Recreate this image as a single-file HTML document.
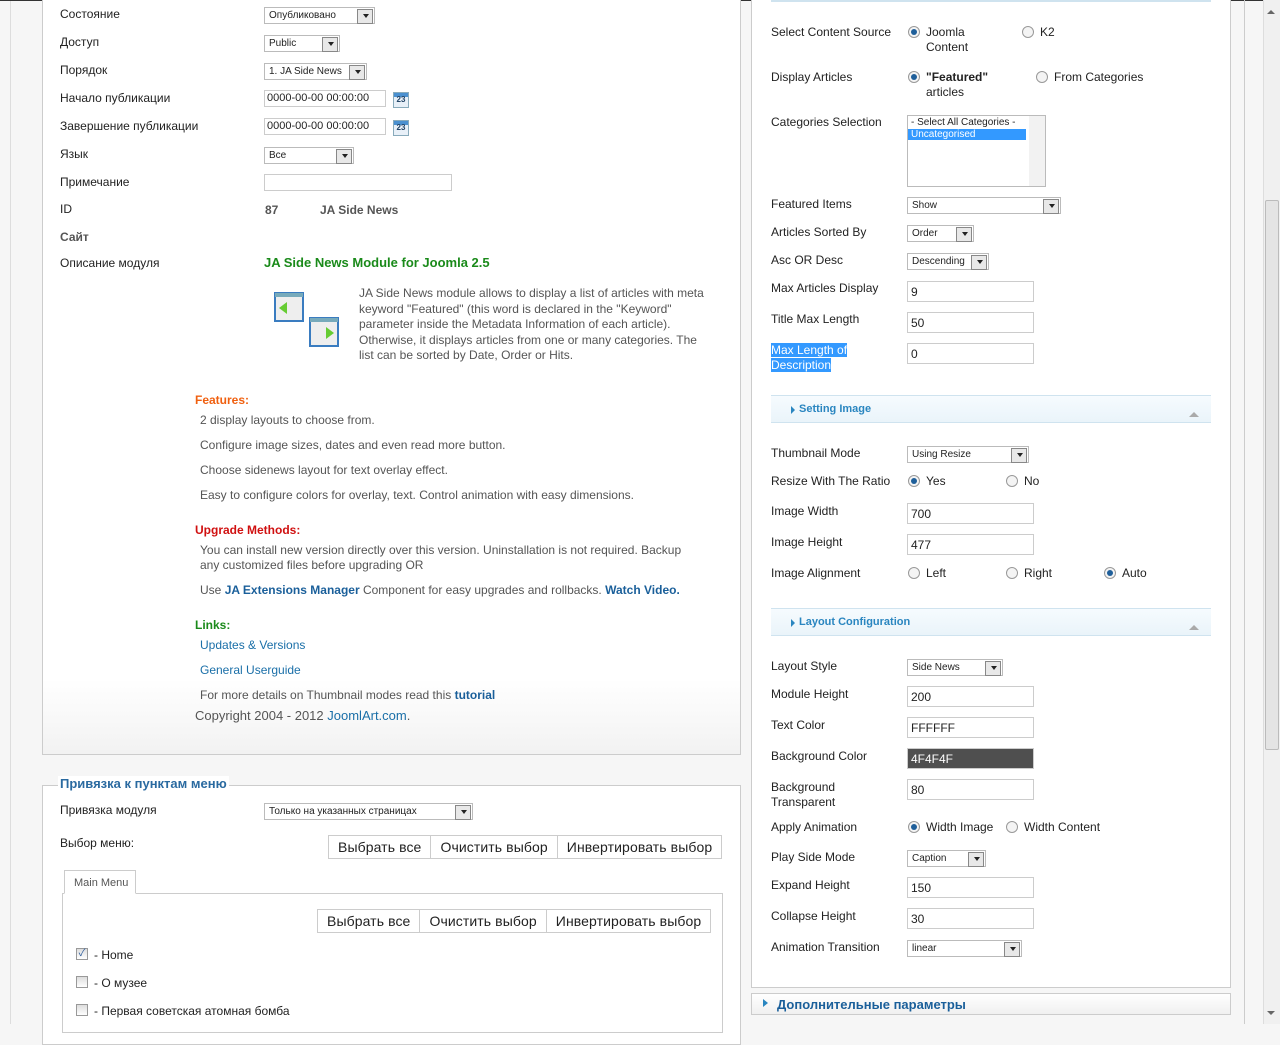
<!DOCTYPE html>
<html><head><meta charset="utf-8"><style>
*{box-sizing:border-box;margin:0;padding:0}
body{width:1280px;height:1024px;overflow:hidden;background:#f6f6f6;font-family:"Liberation Sans","Noto Sans CJK SC",sans-serif;font-size:12px;color:#222;position:relative}
.a{position:absolute;white-space:nowrap}
.panel{position:absolute;background:#fff;border:1px solid #ccc}
.sel{position:absolute;height:17px;border:1px solid #bbb;background:#fff;font-size:10px;padding:2px 4px;color:#222}
.sel:after{content:"";position:absolute;right:1px;top:1px;width:14px;height:13px;background:#e8e8e8;border:1px solid #888}
.sel i{position:absolute;right:5px;top:6px;border:3px solid transparent;border-top:4px solid #222;z-index:2}
.inp{position:absolute;height:21px;border:1px solid #ccc;background:#fff;font-size:12px;padding:3px 3px}
.cal{position:absolute;width:16px;height:16px;background:linear-gradient(#4a90d0 0 4px,#e8f0f8 4px);border:1px solid #8ab;font-size:8px;font-weight:bold;color:#246;text-align:center;line-height:14px}
.rad{position:absolute;width:12px;height:12px;border-radius:50%;border:1px solid #999;background:#f4f4f4}
.rad.on:after{content:"";position:absolute;left:2px;top:2px;width:6px;height:6px;border-radius:50%;background:#1f5f9a}
.bar{position:absolute;left:771px;width:440px;height:28px;border-top:1px solid #cfe3ef;border-bottom:1px solid #cfe3ef;background:linear-gradient(#f6fbfe,#eaf4fa);color:#2a86c0;font-weight:bold;font-size:11px;padding:7px 0 0 20px}
.bar:before{content:"";position:absolute;left:20px;top:10px;border:4px solid transparent;border-left:4px solid #2a86c0}
.bar span{margin-left:8px}
.bar:after{content:"";position:absolute;right:12px;top:11px;border:5px solid transparent;border-bottom:5px solid #aaa}
.btns{position:absolute;display:flex;border:1px solid #ccc;background:#fff}
.btns div{padding:3px 9px;border-left:1px solid #ccc;font-size:14px;letter-spacing:0.1px}
.btns div:first-child{border-left:0}
.cb{position:absolute;width:12px;height:12px;border:1px solid #999;background:linear-gradient(#ddd,#fff)}
.g{color:#555}
</style></head><body>
<div class="a" style="left:10px;top:0;width:1px;height:1024px;background:#ddd"></div>
<div class="a" style="left:0;top:0;width:1264px;height:1px;background:#333"></div>

<!-- left panel -->
<div class="panel" style="left:42px;top:-2px;width:699px;height:757px;background:linear-gradient(#fff 0,#fff 680px,#f2f2f2)"></div>
<div class="a" style="left:60px;top:7px">Состояние</div><div class="sel" style="left:264px;top:7px;width:111px">Опубликовано<i></i></div>
<div class="a" style="left:60px;top:35px">Доступ</div><div class="sel" style="left:264px;top:35px;width:76px">Public<i></i></div>
<div class="a" style="left:60px;top:63px">Порядок</div><div class="sel" style="left:264px;top:63px;width:103px">1. JA Side News<i></i></div>
<div class="a" style="left:60px;top:91px">Начало публикации</div><div class="inp" style="left:264px;top:90px;width:122px;height:17px;font-size:11px;padding:1px 2px">0000-00-00 00:00:00</div><div class="cal" style="left:393px;top:92px">23</div>
<div class="a" style="left:60px;top:119px">Завершение публикации</div><div class="inp" style="left:264px;top:118px;width:122px;height:17px;font-size:11px;padding:1px 2px">0000-00-00 00:00:00</div><div class="cal" style="left:393px;top:120px">23</div>
<div class="a" style="left:60px;top:147px">Язык</div><div class="sel" style="left:264px;top:147px;width:90px">Все<i></i></div>
<div class="a" style="left:60px;top:175px">Примечание</div><div class="inp" style="left:264px;top:174px;width:188px;height:17px"></div>
<div class="a" style="left:60px;top:202px">ID</div><div class="a g" style="left:265px;top:203px;font-weight:bold">87</div><div class="a g" style="left:320px;top:203px;font-weight:bold">JA Side News</div>
<div class="a g" style="left:60px;top:230px;font-weight:bold">Сайт</div>
<div class="a" style="left:60px;top:256px">Описание модуля</div>
<div class="a" style="left:264px;top:255px;color:#1a8a1a;font-weight:bold;font-size:13px">JA Side News Module for Joomla 2.5</div>
<svg class="a" style="left:274px;top:292px" width="70" height="56"><rect x="1" y="1" width="28" height="28" fill="#eee" stroke="#3a7cc0" stroke-width="2"/><rect x="1" y="1" width="28" height="4" fill="#7ab"/><path d="M13 10 L5 16 L13 22Z" fill="#6c3"/><rect x="36" y="26" width="28" height="28" fill="#eee" stroke="#3a7cc0" stroke-width="2"/><rect x="36" y="26" width="28" height="4" fill="#7ab"/><path d="M52 35 L60 41 L52 47Z" fill="#6c3"/></svg>
<div class="a g" style="left:359px;top:286px;white-space:normal;width:352px;line-height:15.5px">JA Side News module allows to display a list of articles with meta keyword "Featured" (this word is declared in the "Keyword" parameter inside the Metadata Information of each article). Otherwise, it displays articles from one or many categories. The list can be sorted by Date, Order or Hits.</div>
<div class="a" style="left:195px;top:393px;color:#f06010;font-weight:bold">Features:</div>
<div class="a g" style="left:200px;top:413px">2 display layouts to choose from.</div>
<div class="a g" style="left:200px;top:438px">Configure image sizes, dates and even read more button.</div>
<div class="a g" style="left:200px;top:463px">Choose sidenews layout for text overlay effect.</div>
<div class="a g" style="left:200px;top:488px">Easy to configure colors for overlay, text. Control animation with easy dimensions.</div>
<div class="a" style="left:195px;top:523px;color:#d01010;font-weight:bold">Upgrade Methods:</div>
<div class="a g" style="left:200px;top:543px;white-space:normal;width:500px;line-height:15px">You can install new version directly over this version. Uninstallation is not required. Backup any customized files before upgrading OR</div>
<div class="a g" style="left:200px;top:583px">Use <b style="color:#1a5f9a">JA Extensions Manager</b> Component for easy upgrades and rollbacks. <b style="color:#1a5f9a">Watch Video.</b></div>
<div class="a" style="left:195px;top:618px;color:#1a8a1a;font-weight:bold">Links:</div>
<div class="a" style="left:200px;top:638px;color:#1a6fa8">Updates &amp; Versions</div>
<div class="a" style="left:200px;top:663px;color:#1a6fa8">General Userguide</div>
<div class="a g" style="left:200px;top:688px">For more details on Thumbnail modes read this <b style="color:#1a5f9a">tutorial</b></div>
<div class="a g" style="left:195px;top:708px;font-size:13px">Copyright 2004 - 2012 <span style="color:#1a6fa8">JoomlArt.com</span>.</div>

<!-- bottom fieldset -->
<div class="panel" style="left:42px;top:785px;width:699px;height:260px"></div>
<div class="a" style="left:58px;top:776px;background:#fff;padding:0 2px;color:#2a6aa0;font-weight:bold;font-size:13px">Привязка к пунктам меню</div>
<div class="a" style="left:60px;top:803px">Привязка модуля</div><div class="sel" style="left:264px;top:803px;width:209px">Только на указанных страницах<i></i></div>
<div class="a" style="left:60px;top:836px">Выбор меню:</div>
<div class="btns" style="left:328px;top:835px"><div>Выбрать все</div><div>Очистить выбор</div><div>Инвертировать выбор</div></div>
<div class="a" style="left:62px;top:893px;width:661px;height:140px;border:1px solid #ccc"></div>
<div class="a" style="left:64px;top:870px;width:72px;height:24px;border:1px solid #ccc;border-bottom:1px solid #fff;background:#fff;font-size:11px;color:#555;padding:6px 9px">Main Menu</div>
<div class="btns" style="left:317px;top:909px"><div>Выбрать все</div><div>Очистить выбор</div><div>Инвертировать выбор</div></div>
<div class="cb" style="left:76px;top:948px;font-size:10px;color:#2a5a9a;line-height:9px;text-align:center">✓</div><div class="a" style="left:94px;top:948px">- Home</div>
<div class="cb" style="left:76px;top:976px"></div><div class="a" style="left:94px;top:976px">- О музее</div>
<div class="cb" style="left:76px;top:1004px"></div><div class="a" style="left:94px;top:1004px">- Первая советская атомная бомба</div>

<!-- right panel -->
<div class="panel" style="left:751px;top:-2px;width:480px;height:990px"></div>
<div class="a" style="left:771px;top:0;width:440px;height:2px;background:#cfe3ef"></div>
<div class="a" style="left:1244px;top:0;width:1px;height:1024px;background:#ccc"></div>
<div class="a" style="left:771px;top:25px">Select Content Source</div>
<div class="rad on" style="left:908px;top:26px"></div><div class="a" style="left:926px;top:25px;line-height:15px">Joomla<br>Content</div>
<div class="rad" style="left:1022px;top:26px"></div><div class="a" style="left:1040px;top:25px">K2</div>
<div class="a" style="left:771px;top:70px">Display Articles</div>
<div class="rad on" style="left:908px;top:71px"></div><div class="a" style="left:926px;top:70px;line-height:15px"><b>"Featured"</b><br>articles</div>
<div class="rad" style="left:1036px;top:71px"></div><div class="a" style="left:1054px;top:70px">From Categories</div>
<div class="a" style="left:771px;top:115px">Categories Selection</div>
<div class="a" style="left:907px;top:115px;width:139px;height:72px;border:1px solid #bbb;background:#fff"><div style="font-size:10px;padding:1px 3px">- Select All Categories -</div><div style="font-size:10px;padding:0 3px;background:#3399ff;color:#fff;width:118px">Uncategorised</div><div style="position:absolute;right:0;top:0;width:16px;height:70px;background:#f2f2f2"></div></div>
<div class="a" style="left:771px;top:197px">Featured Items</div><div class="sel" style="left:907px;top:197px;width:154px">Show<i></i></div>
<div class="a" style="left:771px;top:225px">Articles Sorted By</div><div class="sel" style="left:907px;top:225px;width:67px">Order<i></i></div>
<div class="a" style="left:771px;top:253px">Asc OR Desc</div><div class="sel" style="left:907px;top:253px;width:82px">Descending<i></i></div>
<div class="a" style="left:771px;top:281px">Max Articles Display</div><div class="inp" style="left:907px;top:281px;width:127px">9</div>
<div class="a" style="left:771px;top:312px">Title Max Length</div><div class="inp" style="left:907px;top:312px;width:127px">50</div>
<div class="a" style="left:771px;top:343px;line-height:15px"><span style="background:#3399ff;color:#fff">Max Length of</span><br><span style="background:#3399ff;color:#fff">Description</span></div><div class="inp" style="left:907px;top:343px;width:127px">0</div>
<div class="bar" style="top:395px"><span>Setting Image</span></div>
<div class="a" style="left:771px;top:446px">Thumbnail Mode</div><div class="sel" style="left:907px;top:446px;width:122px">Using Resize<i></i></div>
<div class="a" style="left:771px;top:474px">Resize With The Ratio</div>
<div class="rad on" style="left:908px;top:475px"></div><div class="a" style="left:926px;top:474px">Yes</div>
<div class="rad" style="left:1006px;top:475px"></div><div class="a" style="left:1024px;top:474px">No</div>
<div class="a" style="left:771px;top:504px">Image Width</div><div class="inp" style="left:907px;top:503px;width:127px">700</div>
<div class="a" style="left:771px;top:535px">Image Height</div><div class="inp" style="left:907px;top:534px;width:127px">477</div>
<div class="a" style="left:771px;top:566px">Image Alignment</div>
<div class="rad" style="left:908px;top:567px"></div><div class="a" style="left:926px;top:566px">Left</div>
<div class="rad" style="left:1006px;top:567px"></div><div class="a" style="left:1024px;top:566px">Right</div>
<div class="rad on" style="left:1104px;top:567px"></div><div class="a" style="left:1122px;top:566px">Auto</div>
<div class="bar" style="top:608px"><span>Layout Configuration</span></div>
<div class="a" style="left:771px;top:659px">Layout Style</div><div class="sel" style="left:907px;top:659px;width:96px">Side News<i></i></div>
<div class="a" style="left:771px;top:687px">Module Height</div><div class="inp" style="left:907px;top:686px;width:127px">200</div>
<div class="a" style="left:771px;top:718px">Text Color</div><div class="inp" style="left:907px;top:717px;width:127px">FFFFFF</div>
<div class="a" style="left:771px;top:749px">Background Color</div><div class="inp" style="left:907px;top:748px;width:127px;background:#4f4f4f;color:#fff">4F4F4F</div>
<div class="a" style="left:771px;top:780px;line-height:15px">Background<br>Transparent</div><div class="inp" style="left:907px;top:779px;width:127px">80</div>
<div class="a" style="left:771px;top:820px">Apply Animation</div>
<div class="rad on" style="left:908px;top:821px"></div><div class="a" style="left:926px;top:820px">Width Image</div>
<div class="rad" style="left:1006px;top:821px"></div><div class="a" style="left:1024px;top:820px">Width Content</div>
<div class="a" style="left:771px;top:850px">Play Side Mode</div><div class="sel" style="left:907px;top:850px;width:79px">Caption<i></i></div>
<div class="a" style="left:771px;top:878px">Expand Height</div><div class="inp" style="left:907px;top:877px;width:127px">150</div>
<div class="a" style="left:771px;top:909px">Collapse Height</div><div class="inp" style="left:907px;top:908px;width:127px">30</div>
<div class="a" style="left:771px;top:940px">Animation Transition</div><div class="sel" style="left:907px;top:940px;width:115px">linear<i></i></div>
<div class="a" style="left:751px;top:993px;width:480px;height:22px;border:1px solid #ccc;background:linear-gradient(#fff,#f0f0f0);color:#1a5f9a;font-weight:bold;font-size:13px;padding:3px 0 0 25px">Дополнительные параметры</div>
<div class="a" style="left:763px;top:999px;border:4px solid transparent;border-left:5px solid #2a86c0"></div>

<!-- scrollbar -->
<div class="a" style="left:1263px;top:0;width:17px;height:1024px;background:#f0f0f0;border-left:1px solid #ddd"></div>
<div class="a" style="left:1265px;top:200px;width:14px;height:550px;background:#e4e4e4;border:1px solid #bbb;border-radius:2px"></div>
<div class="a" style="left:1267px;top:6px;border:4px solid transparent;border-bottom:4px solid #666"></div>
<div class="a" style="left:1267px;top:1011px;border:4px solid transparent;border-top:4px solid #666"></div>
</body></html>
